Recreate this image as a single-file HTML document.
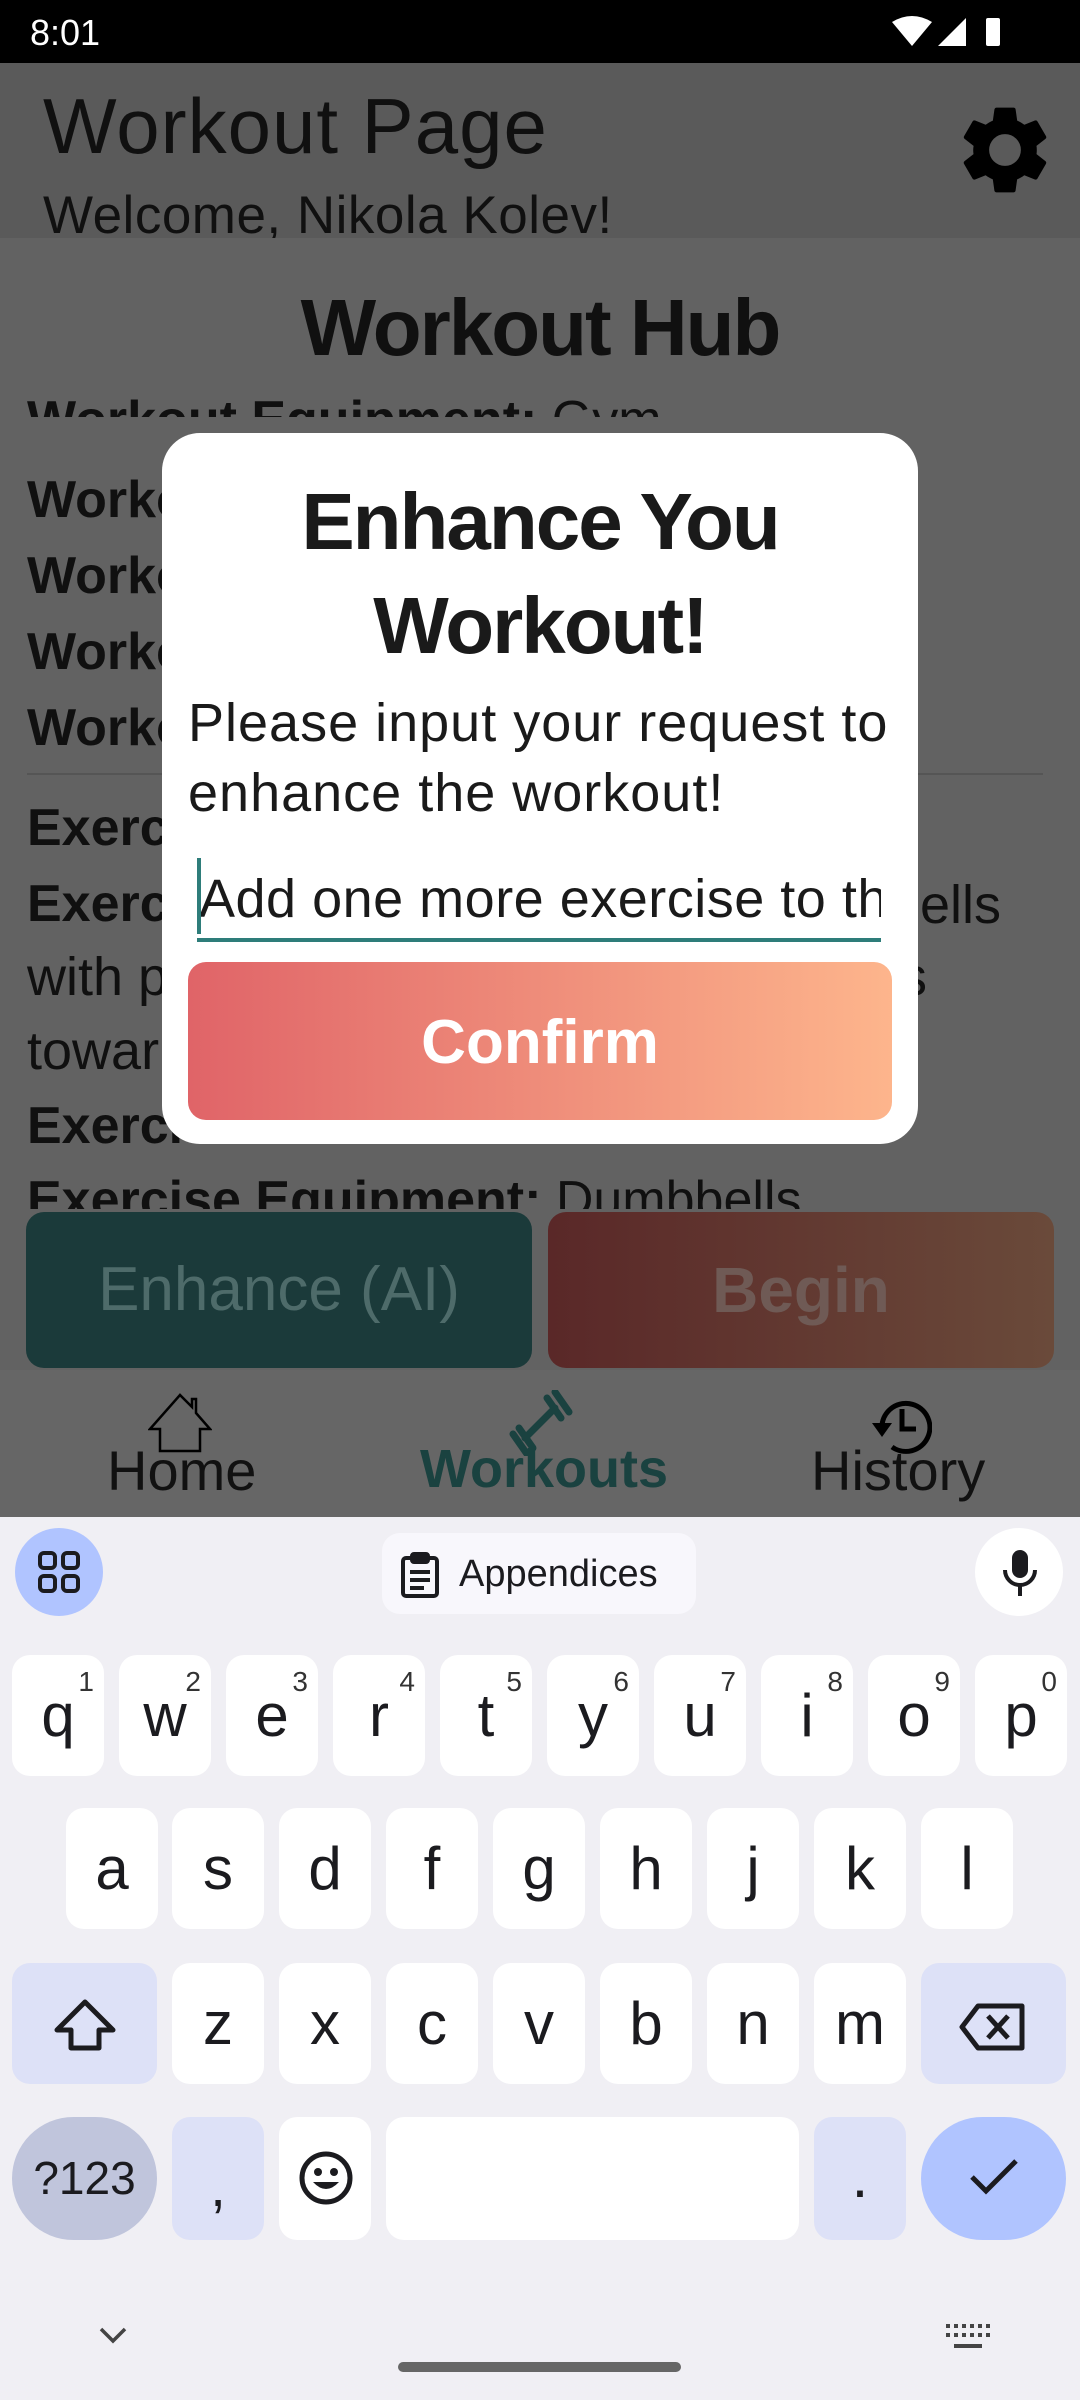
<!DOCTYPE html>
<html><head><meta charset="utf-8"><style>
*{margin:0;padding:0;box-sizing:border-box}
body{width:1080px;height:2400px;position:relative;overflow:hidden;background:#626262;font-family:"Liberation Sans",sans-serif;color:#101010}
.a{position:absolute;white-space:nowrap}
.k{position:absolute;background:#fff;border-radius:18px;width:92px;height:121px;font-size:60px;color:#1b1b1f;text-align:center;line-height:121px}
.k sup{position:absolute;right:10px;top:-34px;font-size:28px;color:#333}
</style></head><body>
<div class="a" style="left:0;top:0;width:1080px;height:63px;background:#000"></div>
<div class="a" style="left:30px;top:12px;color:#fff;font-size:36px">8:01</div>
<svg class="a" style="left:890px;top:14px" width="120" height="36" viewBox="0 0 120 36"><path d="M2 8 Q22 -4 42 8 L22 32 Z" fill="#fff"/><path d="M76 4 L76 32 L48 32 Z" fill="#fff"/><rect x="96" y="4" width="14" height="28" rx="2" fill="#fff"/></svg>
<div class="a" style="left:0;top:63px;width:1080px;height:175px;background:#5a5a5a;overflow:hidden">
<div class="a" style="left:43px;top:18px;font-size:78px;letter-spacing:1px">Workout Page</div>
<div class="a" style="left:43px;top:122px;font-size:53px;letter-spacing:0.5px">Welcome, Nikola Kolev!</div>
<svg class="a" style="left:952px;top:34px" width="106" height="106" viewBox="0 0 24 24"><path fill="#000" d="M19.14 12.94c.04-.3.06-.61.06-.94 0-.32-.02-.64-.07-.94l2.03-1.58a.49.49 0 0 0 .12-.61l-1.920-3.32a.49.49 0 0 0-.59-.22l-2.39.96c-.5-.38-1.03-.7-1.62-.94l-.36-2.54a.48.48 0 0 0-.48-.41h-3.84c-.24 0-.43.17-.47.41l-.36 2.54c-.59.24-1.13.57-1.62.94l-2.39-.96a.48.48 0 0 0-.59.22L2.74 8.87c-.12.21-.08.47.12.61l2.03 1.58c-.05.3-.09.63-.09.94s.02.64.07.94l-2.03 1.58a.49.49 0 0 0-.12.61l1.92 3.32c.12.22.37.29.59.22l2.39-.96c.5.38 1.03.7 1.62.94l.36 2.54c.05.24.24.41.48.41h3.84c.24 0 .44-.17.47-.41l.36-2.54c.59-.24 1.13-.56 1.62-.94l2.39.96c.22.08.47 0 .59-.22l1.92-3.32c.12-.22.07-.47-.12-.61l-2.01-1.58zM12 15.6A3.6 3.6 0 1 1 12 8.4a3.6 3.6 0 0 1 0 7.2z"/></svg>
</div>
<div class="a" style="left:0;top:238px;width:1080px;height:971px;overflow:hidden">
<div class="a" style="left:0;width:1080px;text-align:center;top:44px;font-size:80px;font-weight:bold;letter-spacing:-2px">Workout Hub</div>
<div class="a" style="left:0;top:148px;width:1080px;height:31px;overflow:hidden"><div class="a" style="left:27px;top:4px;font-size:52px"><b>Workout Equipment:</b> Gym</div></div>
<div class="a" style="left:27px;top:232px;font-size:52px;font-weight:bold">Workout</div>
<div class="a" style="left:27px;top:308px;font-size:52px;font-weight:bold">Workout</div>
<div class="a" style="left:27px;top:384px;font-size:52px;font-weight:bold">Workout</div>
<div class="a" style="left:27px;top:460px;font-size:52px;font-weight:bold">Workout</div>
<div class="a" style="left:27px;top:535px;width:1016px;height:2px;background:#555"></div>
<div class="a" style="left:27px;top:560px;font-size:52px;font-weight:bold">Exercise</div>
<div class="a" style="left:27px;top:636px;font-size:52px;font-weight:bold">Exercise</div>
<div class="a" style="left:920px;top:636px;font-size:54px">ells</div>
<div class="a" style="left:27px;top:708px;font-size:54px">with p</div>
<div class="a" style="left:900px;top:708px;font-size:54px">s</div>
<div class="a" style="left:27px;top:782px;font-size:54px">towar</div>
<div class="a" style="left:27px;top:858px;font-size:52px;font-weight:bold">Exercise</div>
<div class="a" style="left:27px;top:932px;font-size:52px"><b>Exercise Equipment:</b> Dumbbells</div>
</div>
<div class="a" style="left:26px;top:1212px;width:506px;height:156px;border-radius:18px;background:#1b3a3a;color:#4e6b6a;font-size:62px;text-align:center;line-height:156px">Enhance (AI)</div>
<div class="a" style="left:548px;top:1212px;width:506px;height:156px;border-radius:18px;background:linear-gradient(90deg,#5a2828,#6a4a3a);color:#6f5a55;font-size:64px;font-weight:bold;text-align:center;line-height:156px">Begin</div>
<div class="a" style="left:0;top:1370px;width:1080px;height:147px;background:#666"></div>
<svg class="a" style="left:148px;top:1393px" width="64" height="60" viewBox="0 0 64 60"><path d="M32 2 L2 36 L12 36 L12 58 L52 58 L52 36 L62 36 L48 20 L48 6 L44 6 L44 14 Z" fill="none" stroke="#000" stroke-width="2.5"/></svg>
<div class="a" style="left:107px;top:1438px;font-size:56px;color:#111">Home</div>
<svg class="a" style="left:505px;top:1390px" width="70" height="66" viewBox="0 0 70 66"><g stroke="#1a4240" stroke-width="7" stroke-linecap="round"><line x1="8" y1="44" x2="22" y2="64"/><line x1="14" y1="38" x2="28" y2="58"/><line x1="20" y1="48" x2="50" y2="18"/><line x1="42" y1="8" x2="56" y2="28"/><line x1="50" y1="2" x2="64" y2="22"/></g></svg>
<div class="a" style="left:420px;top:1438px;font-size:54px;font-weight:bold;color:#1a4240">Workouts</div>
<svg class="a" style="left:868px;top:1395px" width="64" height="62" viewBox="0 0 64 62"><path d="M14 30 A24 24 0 1 1 24 52" fill="none" stroke="#000" stroke-width="5"/><path d="M4 28 L24 28 L14 42 Z" fill="#000"/><path d="M34 14 L34 34 L48 34" fill="none" stroke="#000" stroke-width="5"/></svg>
<div class="a" style="left:811px;top:1438px;font-size:56px;color:#111">History</div>
<div class="a" style="left:162px;top:433px;width:756px;height:711px;background:#fff;border-radius:38px"></div>
<div class="a" style="left:162px;top:470px;width:756px;text-align:center;font-size:80px;font-weight:bold;line-height:104px;letter-spacing:-2px;color:#1a1a1a">Enhance You<br>Workout!</div>
<div class="a" style="left:188px;top:688px;font-size:54px;line-height:70px;letter-spacing:1px;color:#1a1a1a">Please input your request to<br>enhance the workout!</div>
<div class="a" style="left:197px;top:860px;width:684px;height:80px;overflow:hidden"><div class="a" style="left:2px;top:8px;font-size:54px;letter-spacing:0.5px;color:#1a1a1a">Add one more exercise to the</div></div>
<div class="a" style="left:197px;top:858px;width:4px;height:76px;background:#2e7d7a"></div>
<div class="a" style="left:197px;top:938px;width:684px;height:4px;background:#2e7d7a"></div>
<div class="a" style="left:188px;top:962px;width:704px;height:158px;border-radius:18px;background:linear-gradient(90deg,#e06468,#fdb58c);color:#fff;font-size:62px;font-weight:bold;text-align:center;line-height:162px">Confirm</div>
<div class="a" style="left:0;top:1517px;width:1080px;height:883px;background:#f0eff4"></div>
<div class="a" style="left:15px;top:1528px;width:88px;height:88px;border-radius:44px;background:#b0c4ff"></div>
<svg class="a" style="left:37px;top:1550px" width="44" height="44" viewBox="0 0 44 44"><g fill="none" stroke="#1b1b1f" stroke-width="4"><rect x="3" y="3" width="15" height="15" rx="4"/><rect x="26" y="3" width="15" height="15" rx="4"/><rect x="3" y="26" width="15" height="15" rx="4"/><rect x="26" y="26" width="15" height="15" rx="4"/></g></svg>
<div class="a" style="left:382px;top:1533px;width:314px;height:81px;border-radius:18px;background:#f8f7fc"></div>
<svg class="a" style="left:400px;top:1552px" width="40" height="46" viewBox="0 0 40 46"><g fill="none" stroke="#1b1b1f" stroke-width="4"><rect x="3" y="6" width="34" height="38" rx="3"/><rect x="12" y="2" width="16" height="8" rx="2"/><line x1="10" y1="20" x2="30" y2="20"/><line x1="10" y1="28" x2="30" y2="28"/><line x1="10" y1="36" x2="24" y2="36"/></g></svg>
<div class="a" style="left:459px;top:1553px;font-size:38px;color:#1b1b1f">Appendices</div>
<div class="a" style="left:975px;top:1528px;width:88px;height:88px;border-radius:44px;background:#fff"></div>
<svg class="a" style="left:1000px;top:1548px" width="40" height="50" viewBox="0 0 40 50"><rect x="12" y="2" width="16" height="28" rx="8" fill="#1b1b1f"/><path d="M5 22 A15 15 0 0 0 35 22" fill="none" stroke="#1b1b1f" stroke-width="4"/><line x1="20" y1="37" x2="20" y2="48" stroke="#1b1b1f" stroke-width="4"/></svg>
<div class="k" style="left:12px;top:1655px">q<sup>1</sup></div>
<div class="k" style="left:119px;top:1655px">w<sup>2</sup></div>
<div class="k" style="left:226px;top:1655px">e<sup>3</sup></div>
<div class="k" style="left:333px;top:1655px">r<sup>4</sup></div>
<div class="k" style="left:440px;top:1655px">t<sup>5</sup></div>
<div class="k" style="left:547px;top:1655px">y<sup>6</sup></div>
<div class="k" style="left:654px;top:1655px">u<sup>7</sup></div>
<div class="k" style="left:761px;top:1655px">i<sup>8</sup></div>
<div class="k" style="left:868px;top:1655px">o<sup>9</sup></div>
<div class="k" style="left:975px;top:1655px">p<sup>0</sup></div>
<div class="k" style="left:66px;top:1808px">a</div>
<div class="k" style="left:172px;top:1808px">s</div>
<div class="k" style="left:279px;top:1808px">d</div>
<div class="k" style="left:386px;top:1808px">f</div>
<div class="k" style="left:493px;top:1808px">g</div>
<div class="k" style="left:600px;top:1808px">h</div>
<div class="k" style="left:707px;top:1808px">j</div>
<div class="k" style="left:814px;top:1808px">k</div>
<div class="k" style="left:921px;top:1808px">l</div>
<div class="k" style="left:12px;top:1963px;width:145px;background:#dde1f7"></div>
<svg class="a" style="left:53px;top:1998px" width="64" height="54" viewBox="0 0 64 54"><path d="M32 4 L4 32 L18 32 L18 50 L46 50 L46 32 L60 32 Z" fill="none" stroke="#1b1b1f" stroke-width="5" stroke-linejoin="round"/></svg>
<div class="k" style="left:172px;top:1963px">z</div>
<div class="k" style="left:279px;top:1963px">x</div>
<div class="k" style="left:386px;top:1963px">c</div>
<div class="k" style="left:493px;top:1963px">v</div>
<div class="k" style="left:600px;top:1963px">b</div>
<div class="k" style="left:707px;top:1963px">n</div>
<div class="k" style="left:814px;top:1963px">m</div>
<div class="k" style="left:921px;top:1963px;width:145px;background:#dde1f7"></div>
<svg class="a" style="left:958px;top:2002px" width="70" height="50" viewBox="0 0 70 50"><path d="M20 4 L64 4 L64 46 L20 46 L4 25 Z" fill="none" stroke="#1b1b1f" stroke-width="5" stroke-linejoin="round"/><path d="M30 14 L50 36 M50 14 L30 36" stroke="#1b1b1f" stroke-width="5"/></svg>
<div class="k" style="left:12px;top:2117px;width:145px;height:123px;border-radius:62px;background:#c0c5dc;font-size:46px;line-height:123px">?123</div>
<div class="k" style="left:172px;top:2117px;height:123px;background:#dde1f7;line-height:140px;font-size:56px">,</div>
<div class="k" style="left:279px;top:2117px;height:123px"></div>
<svg class="a" style="left:298px;top:2150px" width="56" height="56" viewBox="0 0 56 56"><circle cx="28" cy="28" r="24" fill="none" stroke="#1b1b1f" stroke-width="5"/><circle cx="20" cy="22" r="4" fill="#1b1b1f"/><circle cx="36" cy="22" r="4" fill="#1b1b1f"/><path d="M15 32 Q28 46 41 32 Z" fill="#1b1b1f"/></svg>
<div class="k" style="left:386px;top:2117px;width:413px;height:123px"></div>
<div class="k" style="left:814px;top:2117px;height:123px;background:#dde1f7;line-height:120px">.</div>
<div class="k" style="left:921px;top:2117px;width:145px;height:123px;border-radius:62px;background:#b0c4ff"></div>
<svg class="a" style="left:968px;top:2155px" width="52" height="44" viewBox="0 0 52 44"><path d="M4 22 L18 36 L48 6" fill="none" stroke="#1b1b1f" stroke-width="5"/></svg>
<svg class="a" style="left:98px;top:2326px" width="30" height="20" viewBox="0 0 30 20"><path d="M3 3 L15 15 L27 3" fill="none" stroke="#444" stroke-width="3.5"/></svg>
<svg class="a" style="left:946px;top:2324px" width="44" height="30" viewBox="0 0 44 30"><g fill="#444"><rect x="0" y="0" width="4" height="4"/><rect x="8" y="0" width="4" height="4"/><rect x="16" y="0" width="4" height="4"/><rect x="24" y="0" width="4" height="4"/><rect x="32" y="0" width="4" height="4"/><rect x="40" y="0" width="4" height="4"/><rect x="0" y="9" width="4" height="4"/><rect x="8" y="9" width="4" height="4"/><rect x="16" y="9" width="4" height="4"/><rect x="24" y="9" width="4" height="4"/><rect x="32" y="9" width="4" height="4"/><rect x="40" y="9" width="4" height="4"/><rect x="8" y="20" width="28" height="4"/></g></svg>
<div class="a" style="left:398px;top:2362px;width:283px;height:10px;border-radius:5px;background:#666"></div>
</body></html>
